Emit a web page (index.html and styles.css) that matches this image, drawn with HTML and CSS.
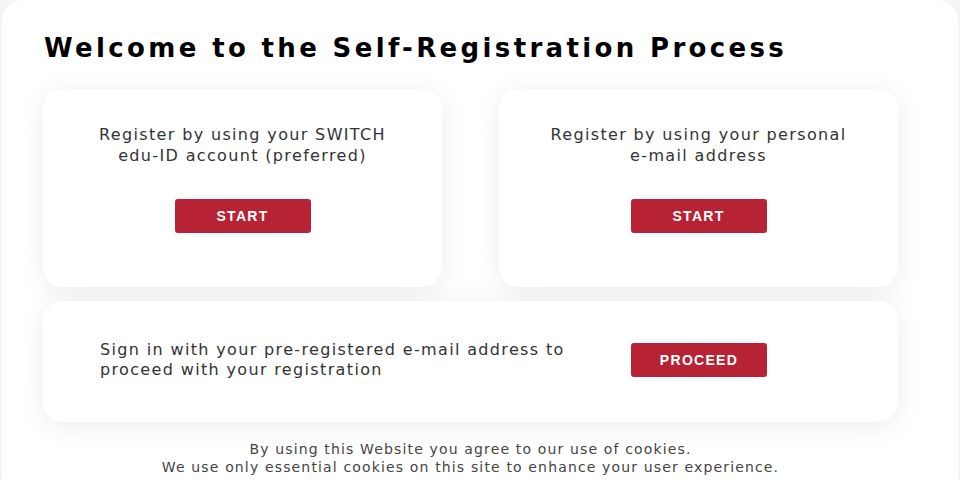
FILE: index.html
```html
<!DOCTYPE html>
<html lang="en">
<head>
<meta charset="utf-8">
<title>Self-Registration</title>
<link rel="stylesheet" href="styles.css">
</head>
<body>
<div class="page">
  <h1 class="title">Welcome to the Self-Registration Process</h1>
  <div class="options">
    <div class="card">
      <p class="card-text">Register by using your SWITCH<br>edu-ID account (preferred)</p>
      <button class="btn">START</button>
    </div>
    <div class="card">
      <p class="card-text">Register by using your personal<br>e-mail address</p>
      <button class="btn">START</button>
    </div>
    <div class="card card-wide">
      <p class="wide-text">Sign in with your pre-registered e-mail address to proceed with your registration</p>
      <button class="btn">PROCEED</button>
    </div>
  </div>
  <div class="footer">
    <p>By using this Website you agree to our use of cookies.</p>
    <p>We use only essential cookies on this site to enhance your user experience.</p>
  </div>
</div>
</body>
</html>
```
FILE: styles.css
```css
html, body {
  margin: 0;
  padding: 0;
}
body {
  background: #f6f6f6;
  font-family: "DejaVu Sans", Verdana, sans-serif;
  color: #333;
}
.page {
  margin: 0 2px;
  min-height: 480px;
  background: #fff;
  border-radius: 20px 20px 0 0;
  box-shadow: 0 0 4px rgba(0,0,0,0.03);
  padding: 29px 60px 0 41px;
  box-sizing: border-box;
}
.title {
  margin: 0 0 0 1px;
  font-size: 26px;
  line-height: 38px;
  font-weight: bold;
  letter-spacing: 3.35px;
  color: #000;
}
.options {
  display: grid;
  grid-template-columns: 399px 399px;
  column-gap: 57px;
  row-gap: 14px;
  margin-top: 22px;
}
.card {
  background: #fff;
  border-radius: 20px;
  box-shadow: 0 4px 28px rgba(0,0,0,0.08);
  padding: 35px 20px 54px;
  display: flex;
  flex-direction: column;
  align-items: center;
}
.card-text {
  margin: 0;
  font-size: 16px;
  line-height: 21px;
  letter-spacing: 1.35px;
  text-align: center;
  color: #333;
}
.btn {
  margin-top: 33px;
  width: 136px;
  height: 34px;
  border: none;
  border-radius: 3px;
  background: #b72334;
  color: #fff;
  font-family: "Liberation Sans", Arial, sans-serif;
  font-size: 14px;
  font-weight: bold;
  letter-spacing: 1.3px;
  padding: 0;
}
.card-wide {
  grid-column: 1 / 3;
  display: grid;
  grid-template-columns: 1fr 136px;
  column-gap: 40px;
  align-items: center;
  padding: 0 131px 0 57px;
  height: 121px;
  box-sizing: border-box;
}
.wide-text {
  margin: 0 0 3px;
  font-size: 16px;
  line-height: 20px;
  letter-spacing: 1.35px;
  color: #333;
}
.card-wide .btn {
  margin-top: 0;
  margin-bottom: 3px;
}
.footer {
  margin-top: 18px;
  text-align: center;
  font-size: 14px;
  line-height: 18px;
  letter-spacing: 1.15px;
  color: #444;
}
.footer p {
  margin: 0;
}
```
